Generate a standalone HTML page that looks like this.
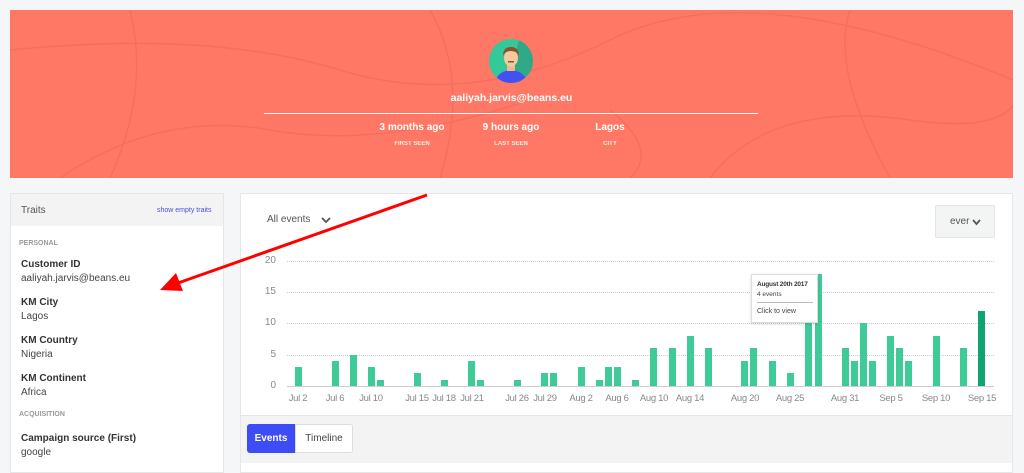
<!DOCTYPE html>
<html><head><style>
*{margin:0;padding:0;box-sizing:border-box}
body{width:1024px;height:463px;overflow:hidden;background:#f5f6f8;font-family:"Liberation Sans",sans-serif;position:relative}
.a{position:absolute}
.hd{left:10px;top:10px;width:1003px;height:168px;background:#ff7865}
.w{color:#fff;text-align:center}
.lp{left:10px;top:193px;width:214px;height:280px;background:#fff;border:1px solid #e6e6e6}
.lh{left:0;top:0;width:212px;height:32px;background:#f3f3f3}
.sec{font-size:7px;font-weight:bold;color:#999;left:8px}
.k{font-size:10px;font-weight:bold;color:#333;left:10px}
.v{font-size:10px;color:#444;left:10px}
.rp{left:240px;top:193px;width:773px;height:280px;background:#fff;border:1px solid #e6e6e6}
.yl{font-size:10px;color:#888;width:20px;text-align:right}
.xl{font-size:9.5px;color:#888;top:393px;width:40px;text-align:center;letter-spacing:-.3px}
.g{left:287px;width:707px;border-top:1px dotted #ccc;height:0}
.b{width:7px;background:#3ecb97}
</style></head><body>
<div class="a hd">
<svg class="a" style="left:0;top:0" width="1003" height="168"><g stroke="#f3705e" stroke-width="1.5" fill="none"><path d="M0 40 Q200 20 330 60 T600 30 T1003 70"/><path d="M50 168 Q150 100 260 120 T520 90"/><path d="M700 168 Q760 90 900 110 T1003 40"/><path d="M120 0 Q140 80 100 168"/><path d="M840 0 Q820 60 880 168"/><path d="M420 0 Q460 70 430 168"/><path d="M600 100 Q650 140 620 168"/></g></svg>
<svg class="a" style="left:479px;top:29px" width="44" height="44"><defs><clipPath id="c"><circle cx="22" cy="22" r="22"/></clipPath></defs><g clip-path="url(#c)"><rect width="44" height="44" fill="#35c99a"/><path d="M30 0L44 0 44 44 20 44z" fill="#2fa987"/><path d="M6 44 Q8 32 22 31 Q36 32 38 44z" fill="#4550f0"/><rect x="18" y="24" width="8" height="8" fill="#eeb98a"/><ellipse cx="22" cy="19" rx="7" ry="8.5" fill="#f4c99b"/><path d="M14 17 Q14 8 22 8 Q30 8 30 17 Q28 12 22 12 Q16 12 14 17z" fill="#8a5230"/><path d="M19 22 h6 v1.5 h-6z" fill="#8a5230"/></g></svg>
<div class="a w" style="left:0;width:1003px;top:82px;font-size:10.5px;font-weight:bold">aaliyah.jarvis@beans.eu</div>
<div class="a" style="left:254px;top:103px;width:494px;border-top:1px solid #fff"></div>
<div class="a w" style="left:352px;width:100px;top:112px;font-size:10px;font-weight:bold">3 months ago</div>
<div class="a w" style="left:451px;width:100px;top:112px;font-size:10px;font-weight:bold">9 hours ago</div>
<div class="a w" style="left:550px;width:100px;top:112px;font-size:10px;font-weight:bold">Lagos</div>
<div class="a w" style="left:352px;width:100px;top:131px;font-size:6px;font-weight:bold;opacity:.85">FIRST SEEN</div>
<div class="a w" style="left:451px;width:100px;top:131px;font-size:6px;font-weight:bold;opacity:.85">LAST SEEN</div>
<div class="a w" style="left:550px;width:100px;top:131px;font-size:6px;font-weight:bold;opacity:.85">CITY</div>
</div>
<div class="a lp">
<div class="a lh"></div>
<div class="a" style="left:10px;top:11px;font-size:10px;color:#555">Traits</div>
<div class="a" style="left:146px;top:13px;font-size:7px;color:#4450e6">show empty traits</div>
<div class="a sec" style="top:46px">PERSONAL</div>
<div class="a k" style="top:65px">Customer ID</div><div class="a v" style="top:79px">aaliyah.jarvis@beans.eu</div>
<div class="a k" style="top:103px">KM City</div><div class="a v" style="top:117px">Lagos</div>
<div class="a k" style="top:141px">KM Country</div><div class="a v" style="top:155px">Nigeria</div>
<div class="a k" style="top:179px">KM Continent</div><div class="a v" style="top:193px">Africa</div>
<div class="a sec" style="top:217px">ACQUISITION</div>
<div class="a k" style="top:239px">Campaign source (First)</div><div class="a v" style="top:253px">google</div>
</div>
<div class="a rp"></div>
<div class="a" style="left:241px;top:415px;width:771px;height:48px;background:#f3f3f3;border-top:1px solid #e6e6e6"></div>
<div class="a" style="left:267px;top:214px;font-size:10px;color:#555">All events</div>
<svg class="a" style="left:321px;top:217px" width="10" height="7"><path d="M1 1l4 4 4-4" stroke="#555" stroke-width="1.8" fill="none"/></svg>
<div class="a" style="left:935px;top:205px;width:60px;height:33px;background:#f3f4f4;border:1px solid #e4e4e4;border-radius:2px;font-size:10px;color:#555;line-height:31px"><span class="a" style="left:14px;top:0">ever</span><svg class="a" style="left:36px;top:13px" width="9" height="7"><path d="M1 1l3.5 4 3.5-4" stroke="#555" stroke-width="1.8" fill="none"/></svg></div>
<div class="a g" style="top:261px"></div><div class="a g" style="top:292px"></div><div class="a g" style="top:323px"></div><div class="a g" style="top:355px"></div>
<div class="a" style="left:287px;top:386px;width:707px;border-top:1px solid #ccc"></div>
<div class="a yl" style="left:256px;top:255px">20</div><div class="a yl" style="left:256px;top:286px">15</div><div class="a yl" style="left:256px;top:317px">10</div><div class="a yl" style="left:256px;top:349px">5</div><div class="a yl" style="left:256px;top:380px">0</div>
<div class="a b" style="left:295px;top:367px;height:19px"></div>
<div class="a b" style="left:332px;top:361px;height:25px"></div>
<div class="a b" style="left:350px;top:355px;height:31px"></div>
<div class="a b" style="left:368px;top:367px;height:19px"></div>
<div class="a b" style="left:377px;top:380px;height:6px"></div>
<div class="a b" style="left:414px;top:373px;height:13px"></div>
<div class="a b" style="left:441px;top:380px;height:6px"></div>
<div class="a b" style="left:468px;top:361px;height:25px"></div>
<div class="a b" style="left:477px;top:380px;height:6px"></div>
<div class="a b" style="left:514px;top:380px;height:6px"></div>
<div class="a b" style="left:541px;top:373px;height:13px"></div>
<div class="a b" style="left:550px;top:373px;height:13px"></div>
<div class="a b" style="left:578px;top:367px;height:19px"></div>
<div class="a b" style="left:596px;top:380px;height:6px"></div>
<div class="a b" style="left:605px;top:367px;height:19px"></div>
<div class="a b" style="left:614px;top:367px;height:19px"></div>
<div class="a b" style="left:632px;top:380px;height:6px"></div>
<div class="a b" style="left:650px;top:348px;height:38px"></div>
<div class="a b" style="left:669px;top:348px;height:38px"></div>
<div class="a b" style="left:687px;top:336px;height:50px"></div>
<div class="a b" style="left:705px;top:348px;height:38px"></div>
<div class="a b" style="left:741px;top:361px;height:25px"></div>
<div class="a b" style="left:750px;top:348px;height:38px"></div>
<div class="a b" style="left:769px;top:361px;height:25px"></div>
<div class="a b" style="left:787px;top:373px;height:13px"></div>
<div class="a b" style="left:805px;top:323px;height:63px"></div>
<div class="a b" style="left:815px;top:274px;height:112px"></div>
<div class="a b" style="left:842px;top:348px;height:38px"></div>
<div class="a b" style="left:851px;top:361px;height:25px"></div>
<div class="a b" style="left:860px;top:323px;height:63px"></div>
<div class="a b" style="left:869px;top:361px;height:25px"></div>
<div class="a b" style="left:887px;top:336px;height:50px"></div>
<div class="a b" style="left:896px;top:348px;height:38px"></div>
<div class="a b" style="left:905px;top:361px;height:25px"></div>
<div class="a b" style="left:933px;top:336px;height:50px"></div>
<div class="a b" style="left:960px;top:348px;height:38px"></div>
<div class="a b" style="left:978px;top:311px;height:75px;background:#10a373"></div>
<div class="a" style="left:751px;top:274px;width:67px;height:49px;background:#fff;border:1px solid #ddd;box-shadow:0 1px 3px rgba(0,0,0,.15)">
<div class="a" style="left:5px;top:6px;font-size:6.5px;font-weight:bold;color:#333;white-space:nowrap;letter-spacing:-.2px">August 20th 2017</div>
<div class="a" style="left:5px;top:16px;font-size:6.5px;color:#444">4 events</div>
<div class="a" style="left:5px;top:27px;width:56px;border-top:1px solid #bbb"></div>
<div class="a" style="left:5px;top:33px;font-size:7px;color:#444">Click to view</div>
</div>
<div class="a xl" style="left:278px">Jul 2</div><div class="a xl" style="left:315px">Jul 6</div><div class="a xl" style="left:351px">Jul 10</div><div class="a xl" style="left:397px">Jul 15</div><div class="a xl" style="left:424px">Jul 18</div><div class="a xl" style="left:452px">Jul 21</div><div class="a xl" style="left:497px">Jul 26</div><div class="a xl" style="left:525px">Jul 29</div><div class="a xl" style="left:561px">Aug 2</div><div class="a xl" style="left:597px">Aug 6</div><div class="a xl" style="left:634px">Aug 10</div><div class="a xl" style="left:670px">Aug 14</div><div class="a xl" style="left:725px">Aug 20</div><div class="a xl" style="left:770px">Aug 25</div><div class="a xl" style="left:825px">Aug 31</div><div class="a xl" style="left:871px">Sep 5</div><div class="a xl" style="left:916px">Sep 10</div><div class="a xl" style="left:962px">Sep 15</div>
<div class="a" style="left:247px;top:424px;width:48px;height:29px;background:#3d4cf5;border-radius:3px 0 0 3px;color:#fff;font-size:10px;font-weight:bold;text-align:center;line-height:29px">Events</div>
<div class="a" style="left:295px;top:424px;width:58px;height:29px;background:#fff;border:1px solid #ddd;border-radius:0 3px 3px 0;color:#444;font-size:10px;text-align:center;line-height:27px">Timeline</div>
<svg class="a" style="left:0;top:0" width="1024" height="463"><line x1="427" y1="195" x2="178" y2="283" stroke="#f00" stroke-width="3"/><path d="M160 290 L176 273 L183 291z" fill="#f00"/></svg>
</body></html>
